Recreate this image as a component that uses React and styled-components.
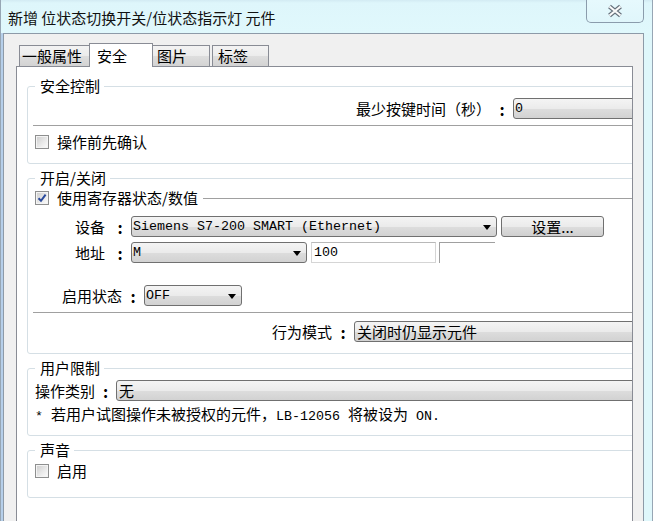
import React from 'react';
import styled, { createGlobalStyle } from 'styled-components';

const CJK = `"Noto Sans CJK SC", "Noto Sans", sans-serif`;
const MONO = `"Liberation Mono", "DejaVu Sans Mono", monospace`;

const GlobalStyle = createGlobalStyle`
  html, body { margin: 0; padding: 0; }
  body { background: #dff6fb; font-family: ${CJK}; }
`;

const Window = styled.div`
  width: 653px;
  height: 521px;
  box-sizing: border-box;
  overflow: hidden;
  display: flex;
  flex-direction: column;
  background: #dff7fb;
  border-left: 1px solid #97a6b4;
  border-right: 1px solid #97a6b4;
  font-family: ${CJK};
  color: #000;
`;

const TitleBar = styled.div`
  height: 33px;
  flex: none;
  display: flex;
  align-items: flex-start;
  padding-left: 7px;
  background: linear-gradient(#d3ebf3 0px, #def6fb 3px, #e0f8fc 100%);
`;

const Title = styled.div`
  margin-top: 8px;
  font-size: 15px;
  line-height: 20px;
  color: #111;
  white-space: nowrap;
`;

const CloseButton = styled.div`
  margin-left: auto;
  margin-right: 8px;
  width: 58px;
  height: 23px;
  box-sizing: border-box;
  border: 1px solid #8b9cac;
  border-top: none;
  border-radius: 0 0 5px 5px;
  background: linear-gradient(#e6f9fd, #e0f6fb);
  display: flex;
  align-items: center;
  justify-content: center;
`;

const Body = styled.div`
  flex: 1;
  min-height: 0;
  display: flex;
`;

const LeftFrame = styled.div`
  width: 2px;
  flex: none;
  background: #b6cfea;
`;

const RightFrame = styled.div`
  width: 8px;
  flex: none;
  background: #dff7fb;
`;

const Client = styled.div`
  flex: 1;
  min-width: 0;
  display: flex;
  flex-direction: column;
  background: #f0f0f0;
  border: 1px solid #8d9aa8;
  border-bottom: none;
  padding: 9px 10px 0 12px;
`;

const TabStrip = styled.div`
  height: 24px;
  display: flex;
  align-items: flex-end;
  padding-left: 3px;
  margin-bottom: -1px;
  position: relative;
  z-index: 1;
`;

const Tab = styled.div`
  box-sizing: border-box;
  width: ${p => p.$w}px;
  height: ${p => (p.$active ? 24 : 21)}px;
  margin-bottom: ${p => (p.$active ? 0 : 1)}px;
  margin-left: ${p => p.$ml || 0}px;
  padding-left: ${p => p.$pad}px;
  display: flex;
  align-items: center;
  font-size: 15px;
  line-height: 18px;
  white-space: nowrap;
  border: 1px solid #898c95;
  border-bottom: none;
  ${p => p.$noLeft && 'border-left: none;'}
  ${p => p.$noRight && 'border-right: none;'}
  background: ${p =>
    p.$active
      ? '#fff'
      : 'linear-gradient(#f3f3f3 0%, #ececec 50%, #dedede 51%, #d3d3d3 100%)'};
`;

const Panel = styled.div`
  flex: 1;
  background: #fff;
  border: 1px solid #898c95;
  border-bottom: none;
  overflow: hidden;
  padding: 10px 0 0 10px;
`;

const Group = styled.fieldset`
  margin: ${p => p.$mt || 0}px -30px 0 0;
  padding: ${p => p.$pt}px 8px ${p => p.$pb}px 7px;
  min-width: 0;
  border: 1px solid #d5dfe5;
  border-radius: 3px;
`;

const Legend = styled.legend`
  padding: 0 4px 0 5px;
  font-size: 15px;
  line-height: 18px;
`;

const Row = styled.div`
  display: flex;
  align-items: center;
  height: ${p => p.$h || 21}px;
  margin-top: ${p => p.$mt || 0}px;
  padding-left: ${p => p.$indent || 0}px;
  justify-content: ${p => (p.$end ? 'flex-end' : 'flex-start')};
`;

const Label = styled.span`
  font-size: 15px;
  line-height: 18px;
  white-space: nowrap;
  min-width: ${p => (p.$w ? `${p.$w}px` : 'auto')};
`;

const ColonMark = styled.span`
  width: 14px;
  margin: 0 4px;
  text-align: center;
  font-size: 16px;
  line-height: 18px;
  font-weight: 700;
`;

const Separator = styled.div`
  height: 1px;
  background: #a0a0a0;
  margin: ${p => p.$mt}px -8px 0 -2px;
`;

const Box = styled.span`
  width: 14px;
  height: 14px;
  flex: none;
  box-sizing: border-box;
  border: 1px solid #8e8f8f;
  background: linear-gradient(135deg, #cbcbcb 0%, #e9e9e9 55%, #fdfdfd 100%);
  box-shadow: inset 0 0 0 1px #f4f4f4;
  display: flex;
  align-items: center;
  justify-content: center;
  margin-right: 8px;
`;

const HeaderLine = styled.div`
  flex: 1;
  height: 1px;
  background: #a0a0a0;
  margin-left: 5px;
  margin-top: 1px;
`;

const ComboBox = styled.div`
  width: ${p => p.$w}px;
  height: 21px;
  flex: none;
  box-sizing: border-box;
  border: 1px solid #707070;
  border-radius: 3px;
  background: linear-gradient(#f4f4f4 0%, #ebebeb 50%, #dddddd 51%, #d2d2d2 100%);
  display: flex;
  align-items: center;
  padding: 0 5px 0 ${p => (p.$cjk ? 2 : 1)}px;
  font-family: ${p => (p.$cjk ? CJK : MONO)};
  font-size: ${p => (p.$cjk ? 15 : 13.33)}px;
  line-height: 18px;
`;

const ComboText = styled.span`
  white-space: nowrap;
`;

const Arrow = styled.span`
  width: 0;
  height: 0;
  margin-left: auto;
  border-left: 4px solid transparent;
  border-right: 4px solid transparent;
  border-top: 5px solid #000;
  margin-top: 1px;
`;

const PushButton = styled.div`
  width: 103px;
  height: 21px;
  margin-left: 4px;
  box-sizing: border-box;
  border: 1px solid #707070;
  border-radius: 3px;
  background: linear-gradient(#f4f4f4 0%, #ebebeb 50%, #dddddd 51%, #cfcfcf 100%);
  display: flex;
  align-items: center;
  justify-content: center;
  font-size: 15px;
  line-height: 18px;
`;

const TextBox = styled.div`
  width: 125px;
  height: 21px;
  margin-left: 4px;
  box-sizing: border-box;
  border: 1px solid #d5d5d5;
  border-top-color: #b8b8b8;
  background: #fff;
  display: flex;
  align-items: center;
  padding-left: 2px;
  font-family: ${MONO};
  font-size: 13.33px;
`;

const StubBox = styled.div`
  width: 56px;
  height: 21px;
  margin-left: 3px;
  box-sizing: border-box;
  border-left: 1px solid #a0a0a0;
  border-top: 1px solid #a0a0a0;
`;

const Note = styled.div`
  margin-top: 4px;
  font-size: 15px;
  line-height: 18px;
  white-space: nowrap;
`;

const Mono = styled.span`
  font-family: ${MONO};
  font-size: 13.33px;
  white-space: pre;
`;

const Colon = () => <ColonMark>:</ColonMark>;

const Combo = ({ w, cjk, children }) => (
  <ComboBox $w={w} $cjk={cjk}>
    <ComboText>{children}</ComboText>
    <Arrow />
  </ComboBox>
);

const Check = ({ checked, children }) => (
  <>
    <Box>
      {checked && (
        <svg width="10" height="10" viewBox="0 0 10 10">
          <path d="M1.5 5.2 L4 7.8 L8.6 1.6" fill="none" stroke="#2a4a9c" strokeWidth="2" />
        </svg>
      )}
    </Box>
    <Label>{children}</Label>
  </>
);

export default function App() {
  return (
    <>
      <GlobalStyle />
      <Window>
        <TitleBar>
          <Title>新增 位状态切换开关/位状态指示灯 元件</Title>
          <CloseButton>
            <svg width="18" height="14" viewBox="0 0 18 14">
              <path d="M3.5 2.5 L14.5 11.5 M14.5 2.5 L3.5 11.5" stroke="#66717c" strokeWidth="4.4" />
              <path d="M3.5 2.5 L14.5 11.5 M14.5 2.5 L3.5 11.5" stroke="#fbfbfb" strokeWidth="2.2" />
            </svg>
          </CloseButton>
        </TitleBar>
        <Body>
          <LeftFrame />
          <Client>
            <TabStrip>
              <Tab $w={70} $pad={2} $noRight>一般属性</Tab>
              <Tab $w={64} $pad={7} $active>安全</Tab>
              <Tab $w={57} $pad={4} $noLeft>图片</Tab>
              <Tab $w={57} $pad={5} $ml={2}>标签</Tab>
            </TabStrip>
            <Panel>
              <Group $pt={3} $pb={11}>
                <Legend>安全控制</Legend>
                <Row $end>
                  <Label>最少按键时间（秒）</Label>
                  <Colon />
                  <Combo w={140}>0</Combo>
                </Row>
                <Separator $mt={6} />
                <Row $h={20} $mt={6}>
                  <Check>操作前先确认</Check>
                </Row>
              </Group>

              <Group $mt={5} $pt={0} $pb={11}>
                <Legend>开启/关闭</Legend>
                <Row $h={22}>
                  <Check checked>使用寄存器状态/数值</Check>
                  <HeaderLine />
                </Row>
                <Row $mt={7} $indent={40}>
                  <Label $w={34}>设备</Label>
                  <Colon />
                  <Combo w={366}>Siemens S7-200 SMART (Ethernet)</Combo>
                  <PushButton>设置...</PushButton>
                </Row>
                <Row $mt={5} $indent={40}>
                  <Label $w={34}>地址</Label>
                  <Colon />
                  <Combo w={176}>M</Combo>
                  <TextBox>100</TextBox>
                  <StubBox />
                </Row>
                <Row $mt={22} $indent={27}>
                  <Label>启用状态</Label>
                  <Colon />
                  <Combo w={98}>OFF</Combo>
                </Row>
                <Separator $mt={6} />
                <Row $mt={8} $end>
                  <Label>行为模式</Label>
                  <Colon />
                  <Combo w={299} cjk>关闭时仍显示元件</Combo>
                </Row>
              </Group>

              <Group $mt={5} $pt={3} $pb={9}>
                <Legend>用户限制</Legend>
                <Row>
                  <Label>操作类别</Label>
                  <Colon />
                  <Combo w={537} cjk>无</Combo>
                </Row>
                <Note>
                  <Mono>* </Mono>若用户试图操作未被授权的元件，<Mono>LB-12056 </Mono>将被设为<Mono> ON.</Mono>
                </Note>
              </Group>

              <Group $mt={5} $pt={2} $pb={16}>
                <Legend>声音</Legend>
                <Row $h={20}>
                  <Check>启用</Check>
                </Row>
              </Group>
            </Panel>
          </Client>
          <RightFrame />
        </Body>
      </Window>
    </>
  );
}
